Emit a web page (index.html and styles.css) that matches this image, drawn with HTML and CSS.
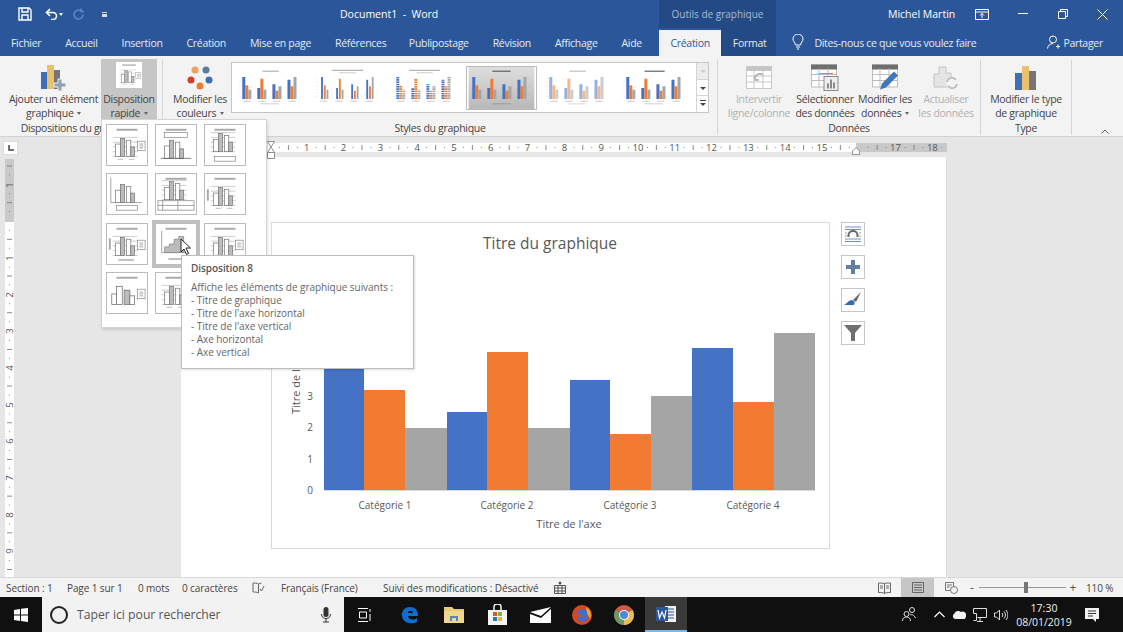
FILE: index.html
```html
<!DOCTYPE html>
<html lang="fr">
  <head>
    <meta charset="UTF-8" />
    <title>Document1 - Word</title>
    <link rel="stylesheet" href="styles.css">
  </head>
  <body>
    <svg class="defs" width="0" height="0">
      <defs>
        <g id="gbars">
          <path fill="#4472c4" d="M4 11h3.300v24H4zM20.500 23h3.300v12h-3.300zM37 19h3.300v16H37zM53.500 14h3.300v21h-3.300z" />
          <path fill="#ed7d31" d="M7.300 20h3.300v15H7.300zM23.800 13h3.300v22h-3.300zM40.300 26h3.300v9h-3.300zM56.800 21h3.300v14h-3.300z" />
          <path fill="#a5a5a5" d="M10.600 25h3.300v10h-3.300zM27.100 25h3.300v10h-3.300zM43.600 21h3.300v14h-3.300zM60.100 11h3.300v24h-3.300z" />
        </g>
        <g id="gthin">
          <path fill="#4472c4" d="M6 11h2v24H6zM22.500 23h2v12h-2zM39 19h2v16h-2zM55.500 14h2v21h-2z" />
          <path fill="#ed7d31" d="M9 20h2v15H9zM25.500 13h2v22h-2zM42 26h2v9h-2zM58.500 21h2v14h-2z" />
          <path fill="#a5a5a5" d="M12 25h2v10h-2zM28.500 25h2v10h-2zM45 21h2v14h-2zM61.500 11h2v24h-2z" />
        </g>
        <g id="gcaps" fill="#b5b5b5">
          <path d="M5 37h8v.8H5zM21.500 37h8v.8h-8zM38 37h8v.8h-8zM54.500 37h8v.8h-8z" />
          <path d="M1 12h1v.6H1zM1 16h1v.6H1zM1 20h1v.6H1zM1 24h1v.6H1zM1 28h1v.6H1zM1 32h1v.6H1z" />
        </g>
        <pattern id="stripes" width="4" height="2.500" patternUnits="userSpaceOnUse">
          <rect width="4" height=".8" fill="#fff" />
        </pattern>
        <linearGradient id="silver" x1="0" y1="0" x2="0" y2="1">
          <stop offset="0" stop-color="#dedede" />
          <stop offset="1" stop-color="#b8b8b8" />
        </linearGradient>
        <g id="tbars" stroke="#6f6f6f" stroke-width=".7">
          <rect x="9" y="20" width="5" height="13" fill="#fff" />
          <rect x="14" y="14" width="4.500" height="19" fill="#bcbcbc" />
          <rect x="20.500" y="16" width="4.500" height="17" fill="#fff" />
          <rect x="25" y="23" width="4" height="10" fill="#bcbcbc" />
        </g>
        <g id="tgrid" stroke="#a9a9a9" stroke-width=".6">
          <path d="M6 13h26M6 18h26M6 23h26M6 28h26M6 33h26" />
        </g>
        <g id="ttitle"><rect x="10" y="4" width="22" height="2" fill="#a8a8a8" /></g>
        <g id="tlegend" fill="#fff" stroke="#808080" stroke-width=".7">
          <rect x="32" y="17" width="8" height="10" />
          <path d="M34 20h4M34 22h4M34 24h4" />
        </g>
        <g id="tcaps"><path d="M11 36h6M23 36h6" stroke="#a8a8a8" stroke-width=".8" /></g>
      </defs>
    </svg>

    <header class="titlebar">
      <div class="qat">
        <svg class="ico" width="14" height="14" viewBox="0 0 14 14" fill="none" stroke="#fff" stroke-width="1.400"><path d="M1 1h10l2 2v10H1z" /><path d="M4 1v4h6V1M4 13V8h6v5" /></svg>
        <svg class="qat-undo" width="13" height="12" viewBox="0 0 13 12" fill="none" stroke="#fff" stroke-width="1.600"><path d="M5 1 1.500 4.500 5 8M2 4.500h6a3.500 3.500 0 0 1 0 7H6" /></svg>
        <span class="caret caret-white qat-caret"></span>
        <svg class="qat-redo" width="13" height="13" viewBox="0 0 13 13" fill="none" stroke="#5f86c1" stroke-width="1.600"><path d="M11 6.500a4.500 4.500 0 1 1-2-3.700M9 .5v3h3" /></svg>
        <span class="qat-more"></span>
      </div>
      <div class="doc-title">Document1 &nbsp;-&nbsp; Word</div>
      <div class="context-label">Outils de graphique</div>
      <div class="user">Michel Martin</div>
      <svg class="win-ribbon" width="14" height="11" viewBox="0 0 14 11" fill="none" stroke="#fff"><path d="M.5.500h13v10H.500zM.5 3h13" /><path d="M7 9V4.500M5 6.500l2-2 2 2" /></svg>
      <svg class="win-min" width="10" height="2" viewBox="0 0 10 2"><rect width="10" height="1" fill="#fff" /></svg>
      <svg class="win-max" width="10" height="10" viewBox="0 0 10 10" fill="none" stroke="#fff"><path d="M.5 2.500h7v7h-7zM2.500 2.500v-2h7v7h-2" /></svg>
      <svg class="win-close" width="11" height="11" viewBox="0 0 11 11" stroke="#fff"><path d="M.5.500l10 10M10.500.500l-10 10" /></svg>
    </header>

    <nav class="tabs">
      <span class="tab">Fichier</span>
      <span class="tab">Accueil</span>
      <span class="tab">Insertion</span>
      <span class="tab">Création</span>
      <span class="tab">Mise en page</span>
      <span class="tab">Références</span>
      <span class="tab">Publipostage</span>
      <span class="tab">Révision</span>
      <span class="tab">Affichage</span>
      <span class="tab">Aide</span>
      <span class="tab tab-active">Création</span>
      <span class="tab tab-context">Format</span>
      <svg class="bulb" width="12" height="16" viewBox="0 0 12 16" fill="none" stroke="#fff"><path d="M3.500 11C3 8 1 7.500 1 5a5 5 0 0 1 10 0c0 2.500-2 3-2.500 6zM4 13h4M5 15h2" /></svg>
      <span class="tell">Dites-nous ce que vous voulez faire</span>
      <svg class="share-ico" width="13" height="14" viewBox="0 0 13 14" fill="none" stroke="#fff"><circle cx="6" cy="4.500" r="3.500" /><path d="M.5 13.500c.5-3 2-4.500 5.500-5M9 11.500h4M11 9.500v4" /></svg>
      <span class="share">Partager</span>
    </nav>

    <section class="ribbon">
      <div class="group group-layouts">
        <div class="group-body">
          <div class="rbtn rbtn-add">
            <svg width="28" height="28" viewBox="0 0 28 28"><rect x="1" y="8" width="6" height="17" fill="#3f6fb5" /><rect x="7" y="1" width="7" height="24" fill="#ecc16b" /><rect x="14" y="6" width="6" height="19" fill="#767676" /><path d="M18 15h4v4h4v4h-4v4h-4v-4h-4v-4h4z" fill="#8ea2ba" stroke="#f3f3f3" /></svg>
            <span>Ajouter un élément<br>graphique <i class="caret"></i></span>
          </div>
          <div class="rbtn rbtn-quick">
            <svg class="quick-ico" width="26" height="26" viewBox="0 0 42 42"><rect width="42" height="42" fill="#fff" /><use href="#ttitle" /><use href="#tgrid" /><use href="#tbars" /><use href="#tlegend" /><use href="#tcaps" /></svg>
            <span>Disposition<br>rapide <i class="caret"></i></span>
          </div>
        </div>
        <div class="group-label">Dispositions du graphique</div>
      </div>

      <div class="group group-styles">
        <div class="group-body">
          <div class="rbtn rbtn-colors">
            <svg width="28" height="26" viewBox="0 0 28 26"><circle cx="9" cy="5" r="3.500" fill="#eda35d" /><circle cx="20" cy="5" r="3.500" fill="#5b7ca0" /><circle cx="5" cy="15" r="3.500" fill="#d2402a" /><circle cx="23" cy="15" r="3.500" fill="#3f6fb5" /><circle cx="14" cy="21" r="3.500" fill="#ed7d31" /></svg>
            <span>Modifier les<br>couleurs <i class="caret"></i></span>
          </div>
          <div class="gallery">
            <div class="gallery-items">
              <svg class="gal" viewBox="0 0 72 46"><rect x="26" y="4" width="18" height="1.200" fill="#aaa" /><use href="#gcaps" /><use href="#gbars" /><rect x="24" y="40" width="20" height=".8" fill="#bbb" /></svg>
              <svg class="gal" viewBox="0 0 72 46"><rect x="18" y="3" width="34" height="1.200" fill="#aaa" /><rect x="26" y="6" width="18" height=".8" fill="#bbb" /><use href="#gcaps" /><use href="#gthin" /></svg>
              <svg class="gal" viewBox="0 0 72 46"><rect x="18" y="3" width="34" height="1.200" fill="#aaa" /><rect x="26" y="6" width="18" height=".8" fill="#bbb" /><use href="#gcaps" /><use href="#gbars" /><rect x="0" y="9" width="72" height="26" fill="url(#stripes)" /></svg>
              <svg class="gal gal-selected" viewBox="0 0 72 46"><rect width="72" height="46" fill="url(#silver)" /><rect x="26" y="4" width="20" height="1.200" fill="#555" /><use href="#gbars" /><rect x="26" y="40" width="20" height=".8" fill="#888" /></svg>
              <svg class="gal" viewBox="0 0 72 46"><rect x="26" y="4" width="18" height="1.200" fill="#bbb" /><use href="#gcaps" /><use href="#gbars" opacity=".55" /><rect x="24" y="40" width="20" height=".8" fill="#ccc" /></svg>
              <svg class="gal" viewBox="0 0 72 46"><rect x="24" y="4" width="22" height="1.200" fill="#555" /><use href="#gcaps" /><use href="#gbars" /><rect x="24" y="40" width="20" height=".8" fill="#bbb" /></svg>
            </div>
            <div class="gallery-scroll">
              <span class="scroll-up"></span>
              <span class="scroll-down"></span>
              <span class="scroll-more"></span>
            </div>
          </div>
        </div>
        <div class="group-label">Styles du graphique</div>
      </div>

      <div class="group group-data">
        <div class="group-body">
          <div class="rbtn rbtn-off rbtn-switch">
            <svg width="26" height="24" viewBox="0 0 26 24" fill="#fff" stroke="#c9c9c9"><rect x=".5" y=".5" width="25" height="22" /><rect x=".5" y=".5" width="25" height="4" fill="#c4c4c4" /><path d="M.5 10h25M.5 16h25M8 4v19M17 4v19" /><path d="M17 9a5 5 0 0 0-8 5M9 10v4h4" fill="none" stroke="#a9a9a9" stroke-width="1.500" /></svg>
            <span>Intervertir<br>ligne/colonne</span>
          </div>
          <div class="rbtn rbtn-select">
            <svg width="28" height="27" viewBox="0 0 28 27" fill="#fff" stroke="#bdbdbd"><rect x=".5" y=".5" width="25" height="22" /><rect x=".5" y=".5" width="25" height="4" fill="#6f6f6f" stroke="#6f6f6f" /><path d="M.5 10h25M.5 16h25M8 4v19M17 4v19" /><path d="M8 9h14" stroke="#ed7d31" /><rect x="13" y="12" width="14" height="14" fill="#eee" stroke="#8a8a8a" /><path d="M16 24v-5h2v5zM19 24v-9h2v9zM22 24v-6h2v6z" fill="#8a8a8a" stroke="none" /></svg>
            <span>Sélectionner<br>des données</span>
          </div>
          <div class="rbtn rbtn-edit">
            <svg width="27" height="27" viewBox="0 0 27 27" fill="#fff" stroke="#bdbdbd"><rect x=".5" y=".5" width="25" height="22" /><rect x=".5" y=".5" width="25" height="4" fill="#6f6f6f" stroke="#6f6f6f" /><path d="M.5 10h25M.5 16h25M8 4v19M17 4v19" /><path d="m8 25 2-6L22 7l4 4-12 12z" fill="#3f76bd" stroke="none" /></svg>
            <span>Modifier les<br>données <i class="caret"></i></span>
          </div>
          <div class="rbtn rbtn-off rbtn-refresh">
            <svg width="26" height="24" viewBox="0 0 26 24"><path d="M1 21V8h5V1h7v6h5v14z" fill="#e4e4e4" stroke="#c4c4c4" /><circle cx="19" cy="17" r="6" fill="#f3f3f3" /><path d="M14 16a5 5 0 0 1 9-2M24 18a5 5 0 0 1-9 2" fill="none" stroke="#bcbcbc" stroke-width="1.600" /></svg>
            <span>Actualiser<br>les données</span>
          </div>
        </div>
        <div class="group-label">Données</div>
      </div>

      <div class="group group-type">
        <div class="group-body">
          <div class="rbtn rbtn-type">
            <svg width="22" height="24" viewBox="0 0 22 24"><rect x="0" y="7" width="7" height="17" fill="#3f6fb5" /><rect x="7" y="0" width="7" height="24" fill="#ecc16b" /><rect x="14" y="5" width="7" height="19" fill="#767676" /></svg>
            <span>Modifier le type<br>de graphique</span>
          </div>
        </div>
        <div class="group-label">Type</div>
      </div>
      <svg class="collapse" width="8" height="5" viewBox="0 0 8 5" fill="none" stroke="#666"><path d="M.5 4.500 4 1l3.500 3.500" /></svg>
    </section>

    <main class="workspace">
      <div class="ruler-row">
        <div class="ruler-corner"><svg width="8" height="8" viewBox="0 0 8 8" fill="none" stroke="#444" stroke-width="1.500"><path d="M2 1v5h5" /></svg></div>
        <div class="hruler">
          <span>1</span><span>2</span><span>3</span><span>4</span><span>5</span><span>6</span><span>7</span><span>8</span><span>9</span><span>10</span><span>11</span><span>12</span><span>13</span><span>14</span><span>15</span><span></span><span>17</span><span>18</span>
        </div>
        <svg class="indent-left" width="8" height="18" viewBox="0 0 8 18" fill="#fff" stroke="#8f8f8f"><path d="M.5.500h7L4 6 .5.500zM4 6l3.500 5.500h-7zM.5 11.500h7v6h-7z" /></svg>
        <svg class="indent-right" width="8" height="8" viewBox="0 0 8 8" fill="#fff" stroke="#8f8f8f"><path d="M4 .5 7.500 4v3.500h-7V4z" /></svg>
      </div>
      <div class="doc-row">
        <div class="left-gutter">
          <div class="vruler">
            <span>1</span><span></span><span>1</span><span>2</span><span>3</span><span>4</span><span>5</span><span>6</span><span>7</span><span>8</span><span>9</span>
          </div>
        </div>
        <div class="page">
          <div class="chart">
            <svg width="559" height="327" viewBox="271 222 559 327">
              <text class="chart-title" x="550" y="249" text-anchor="middle">Titre du graphique</text>
              <g fill="#4472c4">
                <rect x="324" y="354" width="40" height="136" />
                <rect x="447" y="412" width="40" height="78" />
                <rect x="570" y="380" width="40" height="110" />
                <rect x="692" y="348" width="41" height="142" />
              </g>
              <g fill="#f27b31">
                <rect x="364" y="390" width="41" height="100" />
                <rect x="487" y="352" width="41" height="138" />
                <rect x="610" y="434" width="41" height="56" />
                <rect x="733" y="402" width="41" height="88" />
              </g>
              <g fill="#a5a5a5">
                <rect x="405" y="428" width="42" height="62" />
                <rect x="528" y="428" width="42" height="62" />
                <rect x="651" y="396" width="41" height="94" />
                <rect x="774" y="333" width="41" height="157" />
              </g>
              <path d="M324 490.500h491" stroke="#d9d9d9" />
              <g class="chart-axis" text-anchor="end">
                <text x="313" y="400">3</text>
                <text x="313" y="431">2</text>
                <text x="313" y="463">1</text>
                <text x="313" y="494">0</text>
              </g>
              <g class="chart-axis" text-anchor="middle">
                <text x="385" y="509">Catégorie 1</text>
                <text x="507" y="509">Catégorie 2</text>
                <text x="630" y="509">Catégorie 3</text>
                <text x="753" y="509">Catégorie 4</text>
              </g>
              <text class="chart-axis-title" x="569" y="528" text-anchor="middle">Titre de l'axe</text>
              <text class="chart-axis-title" transform="translate(300 414) rotate(-90)">Titre de l'axe</text>
            </svg>
          </div>
          <div class="chart-tools">
            <div class="chart-tool"><svg width="18" height="18" viewBox="0 0 18 18" fill="none"><path d="M1 2h16M1 4.500h16M1 14h16M1 16.500h16" stroke="#6d93bd" /><path d="M1 8h2M15 8h2M1 11h2M15 11h2" stroke="#999" /><path d="M4.500 12V10a4.500 4 0 0 1 9 0v2" stroke="#666" stroke-width="2" /></svg></div>
            <div class="chart-tool"><svg width="14" height="14" viewBox="0 0 14 14"><path d="M5 0h4v5h5v4H9v5H5V9H0V5h5z" fill="#60809e" /></svg></div>
            <div class="chart-tool"><svg width="18" height="16" viewBox="0 0 18 16"><path d="M9 8 17 0l-5 10z" fill="#666" /><path d="M8 8c3 1 3 3 2 5H0c3-1 4-5 8-5z" fill="#2f6db5" /></svg></div>
            <div class="chart-tool"><svg width="18" height="18" viewBox="0 0 18 18"><path d="M0 1h18l-7 8v8H7V9z" fill="#6e6e6e" /></svg></div>
          </div>
        </div>
      </div>
    </main>

    <footer class="statusbar">
      <span class="st st-section">Section : 1</span>
      <span class="st st-page">Page 1 sur 1</span>
      <span class="st st-words">0 mots</span>
      <span class="st st-chars">0 caractères</span>
      <svg class="st-book" width="13" height="12" viewBox="0 0 13 12" fill="none" stroke="#666"><path d="M6.500 2v9M6.500 2C5 1 3 1 1 1v9c2 0 4 0 5.500 1M6.500 2c1-.5 2-.8 3-1M8 7l1.500 2L12 4" /></svg>
      <span class="st st-lang">Français (France)</span>
      <span class="st st-track">Suivi des modifications : Désactivé</span>
      <svg class="st-macro" width="12" height="13" viewBox="0 0 12 13" fill="none" stroke="#555"><path d="M.5 4.500h11v8H.5zM.5 7h11M.5 10h11M4 4.500v8M8 4.500v8" /><circle cx="6" cy="2" r="1.500" fill="#555" stroke="none" /></svg>
      <div class="views">
        <svg width="13" height="12" viewBox="0 0 13 12" fill="none" stroke="#666"><path d="M6.500 1.500v10M6.500 1.500C5 1 3 1 .5 1v9.500c2.500 0 4.500 0 6 1 1.500-1 3.500-1 6-1V1c-2.500 0-4.500 0-6 .5zM2 4h3M2 6h3M8 4h3M8 6h3" /></svg>
        <div class="view-on"><svg width="12" height="11" viewBox="0 0 12 11" fill="none" stroke="#666"><path d="M.5.500h11v10H.5zM2 3h8M2 5.500h8M2 8h8" /></svg></div>
        <svg width="13" height="12" viewBox="0 0 13 12" fill="none" stroke="#777"><path d="M.5.500h8v8h-8zM2 3h5M2 5h3" /><circle cx="9" cy="8" r="3.500" fill="#f3f3f3" /></svg>
      </div>
      <div class="zoom">
        <span class="zoom-sign">-</span>
        <div class="zoom-track"><span class="zoom-thumb"></span></div>
        <span class="zoom-sign">+</span>
      </div>
      <span class="st st-percent">110 %</span>
    </footer>

    <footer class="taskbar">
      <svg class="start" width="14" height="14" viewBox="0 0 14 14" fill="#fff"><path d="m0 2 6-1v5.500H0zM7 .8 14 0v6.500H7zM0 7.500h6V13l-6-1zM7 7.500h7V14l-7-1z" /></svg>
      <div class="search">
        <span class="cortana"></span>
        <span class="search-text">Taper ici pour rechercher</span>
        <svg width="10" height="16" viewBox="0 0 10 16"><rect x="2.500" y="0" width="5" height="10" rx="2.500" fill="#333" /><path d="M.5 7c0 3 2 4.500 4.500 4.500S9.500 10 9.500 7M5 11.500V15M2 15h6" fill="none" stroke="#333" /></svg>
      </div>
      <svg class="tb-ico tb-tasks" width="14" height="14" viewBox="0 0 14 14" fill="none" stroke="#fff"><path d="M0 .5h10M0 13.500h10M1.500 4h7v6h-7zM12 1v3M12 6v7" /></svg>
      <svg class="tb-ico tb-edge" width="18" height="18" viewBox="0 0 18 18"><path d="M1 9c0-5 3-8 8-8s8 3 8 9H7c0 3 5 5 9 2v4c-6 3-15 1-15-7zm6-2h5c0-3-5-3-5 0z" fill="#0f6fd0" /></svg>
      <svg class="tb-ico tb-folder" width="20" height="17" viewBox="0 0 20 17"><path d="M0 1h8l2 2h10v14H0z" fill="#e9c877" /><path d="M0 5h20v12H0z" fill="#f1d68d" /><path d="M6 15v-5h8v5h-2v-3H8v3z" fill="#5586c4" /></svg>
      <svg class="tb-ico tb-store" width="21" height="21" viewBox="0 0 21 21"><path d="M1 6h19v15H1z" fill="#f4f4f4" /><path d="M7 6V3a3.500 3 0 0 1 7 0v3" fill="none" stroke="#f4f4f4" stroke-width="1.500" /><rect x="6" y="8" width="4" height="4" fill="#e2542a" /><rect x="11" y="8" width="4" height="4" fill="#86b23b" /><rect x="6" y="13" width="4" height="4" fill="#1e78c8" /><rect x="11" y="13" width="4" height="4" fill="#eeb52b" /></svg>
      <svg class="tb-ico tb-mail" width="21" height="16" viewBox="0 0 21 16"><path d="M0 5 21 0 11 9z" fill="#fff" /><path d="M0 7v9h21V2L11 11z" fill="#fff" /></svg>
      <svg class="tb-ico tb-firefox" width="20" height="20" viewBox="0 0 20 20"><circle cx="10" cy="10" r="10" fill="#d9471f" /><path d="M4 9c2-5 8-6 11-3 3 4 1 10-4 11-4 0-6-3-5-6 2 2 4 2 5 0-2 0-3-1-3-3-2 1-3 1-4 1z" fill="#3b6fd0" /><path d="M14 2c4 2 6 7 4 12l-3-6z" fill="#f5a623" /></svg>
      <svg class="tb-ico tb-chrome" width="20" height="20" viewBox="0 0 20 20"><circle cx="10" cy="10" r="10" fill="#cf5a46" /><path d="M10 10 18.600 5A10 10 0 0 1 10 20z" fill="#e9bf55" /><path d="M10 10v10A10 10 0 0 1 1.400 5z" fill="#6b9a68" /><circle cx="10" cy="10" r="5" fill="#fff" /><circle cx="10" cy="10" r="4" fill="#4f86d6" /></svg>
      <div class="tb-word">
        <svg width="20" height="18" viewBox="0 0 20 18"><rect x="9" y="1" width="11" height="16" fill="#f2f2f2" /><path d="M11 4h7M11 7h7M11 10h7M11 13h7" stroke="#2b579a" /><rect x="0" y="2" width="12" height="14" fill="#2b579a" /><path d="m2 5 1.500 8 2.500-6 2.500 6L10 5" fill="none" stroke="#fff" stroke-width="1.200" /></svg>
      </div>
      <svg class="tb-ico tb-people" width="14" height="15" viewBox="0 0 14 15" fill="none" stroke="#ddd"><circle cx="4.500" cy="7" r="2.500" /><path d="M.5 14c0-2.500 1.500-4 4-4s4 1.500 4 4" /><circle cx="10" cy="3" r="2.500" /><path d="M8 8c2-1 4 0 5.500 3" /></svg>
      <svg class="tb-ico tb-chevron" width="11" height="7" viewBox="0 0 11 7" fill="none" stroke="#fff" stroke-width="1.200"><path d="m.5 6 5-5 5 5" /></svg>
      <svg class="tb-ico tb-cloud" width="14" height="9" viewBox="0 0 14 9"><path d="M3 9a3 3 0 0 1-.5-5.500A4 4 0 0 1 9 2a3.500 3.500 0 0 1 5 4c0 2-1 3-2 3z" fill="#f2f2f2" /></svg>
      <svg class="tb-ico tb-net" width="14" height="14" viewBox="0 0 14 14" fill="none" stroke="#ddd"><path d="M.5.500h13v9H4.500M7 9.500V13M4 13.500h6M.5.500v5h3v7h-3" /></svg>
      <svg class="tb-ico tb-sound" width="14" height="12" viewBox="0 0 14 12" fill="none" stroke="#ddd"><path d="M.5 4v4h2l3 3V1l-3 3zM8 4c1 1 1 3 0 4M10 2.500c2 2 2 5 0 7M12 1c2.500 3 2.500 7 0 10" /></svg>
      <div class="clock"><span>17:30</span><span>08/01/2019</span></div>
      <svg class="tb-ico tb-notif" width="14" height="14" viewBox="0 0 14 14"><path d="M0 0h14v11h-3v3l-3-3H0z" fill="#f2f2f2" /><path d="M3 3h8M3 5.500h8M3 8h5" stroke="#333" /></svg>
    </footer>

    <div class="layout-menu">
      <div class="layout"><svg viewBox="0 0 42 42"><use href="#ttitle" /><use href="#tgrid" /><use href="#tbars" /><use href="#tlegend" /><use href="#tcaps" /></svg></div>
      <div class="layout"><svg viewBox="0 0 42 42"><use href="#ttitle" /><rect x="9" y="8" width="24" height="5" fill="#fff" stroke="#808080" stroke-width=".7" /><use href="#tbars" y="2" /><path d="M5 35h32" stroke="#555" stroke-width=".8" /></svg></div>
      <div class="layout"><svg viewBox="0 0 42 42"><use href="#ttitle" /><use href="#tgrid" y="-5" /><use href="#tbars" y="-5" /><rect x="10" y="33" width="22" height="5" fill="#fff" stroke="#808080" stroke-width=".7" /></svg></div>
      <div class="layout"><svg viewBox="0 0 42 42"><path d="M4 4v26h33" fill="none" stroke="#777" stroke-width=".7" /><use href="#tbars" y="-3" /><rect x="10" y="33" width="22" height="5" fill="#fff" stroke="#808080" stroke-width=".7" /></svg></div>
      <div class="layout"><svg viewBox="0 0 42 42"><use href="#ttitle" /><use href="#tgrid" y="-6" /><use href="#tbars" y="-6" /><path d="M2 28h38v10H2zM2 33h38M7 28v10M23 28v10" fill="#fff" stroke="#777" stroke-width=".7" /></svg></div>
      <div class="layout"><svg viewBox="0 0 42 42"><use href="#ttitle" /><rect x="2" y="16" width="2" height="12" fill="#a8a8a8" /><use href="#tgrid" /><use href="#tbars" /><use href="#tcaps" /></svg></div>
      <div class="layout"><svg viewBox="0 0 42 42"><use href="#ttitle" /><rect x="2" y="15" width="2" height="12" fill="#a8a8a8" /><use href="#tgrid" /><use href="#tbars" /><use href="#tlegend" /><rect x="12" y="37" width="16" height="1.500" fill="#a8a8a8" /></svg></div>
      <div class="layout layout-active"><svg viewBox="0 0 42 42"><use href="#ttitle" /><path d="M6 7v23h29" fill="none" stroke="#777" stroke-width=".7" /><path d="M9 30v-6h5v-3h5v-5h5v-3h5v17z" fill="#bcbcbc" stroke="#6f6f6f" stroke-width=".6" /><rect x="13" y="36" width="16" height="1.500" fill="#a8a8a8" /></svg></div>
      <div class="layout"><svg viewBox="0 0 42 42"><use href="#ttitle" /><use href="#tgrid" /><use href="#tbars" /><use href="#tlegend" /><use href="#tcaps" /></svg></div>
      <div class="layout"><svg viewBox="0 0 42 42"><use href="#ttitle" /><rect x="10" y="14" width="6" height="19" fill="#fff" stroke="#6f6f6f" stroke-width=".8" /><rect x="18" y="18" width="6" height="15" fill="#bcbcbc" stroke="#6f6f6f" stroke-width=".8" /><rect x="24" y="24" width="5" height="9" fill="#fff" stroke="#6f6f6f" stroke-width=".8" /><rect x="5" y="22" width="5" height="11" fill="#fff" stroke="#6f6f6f" stroke-width=".8" /><use href="#tlegend" /></svg></div>
      <div class="layout"><svg viewBox="0 0 42 42"><use href="#tgrid" /><use href="#tbars" /><use href="#ttitle" /><use href="#tcaps" /></svg></div>
    </div>

    <div class="tooltip">
      <div class="tooltip-title">Disposition 8</div>
      <div>Affiche les éléments de graphique suivants :</div>
      <div>- Titre de graphique</div>
      <div>- Titre de l'axe horizontal</div>
      <div>- Titre de l'axe vertical</div>
      <div>- Axe horizontal</div>
      <div>- Axe vertical</div>
    </div>

    <svg class="cursor" width="12" height="18" viewBox="0 0 12 18"><path d="M1 1v13l3-3 2.500 5.500 2-1L6 10h4.500z" fill="#fff" stroke="#222" /></svg>
  </body>
</html>
```

FILE: styles.css
```css
* {
  box-sizing: border-box;
}

body {
  margin: 0;
  width: 1123px;
  height: 632px;
  overflow: hidden;
  display: flex;
  flex-direction: column;
  font-family: "Open Sans", "Noto Sans", sans-serif;
  font-size: 10.5px;
  color: #444;
  background-color: #e6e6e6;
  position: relative;
}

svg {
  display: block;
  flex: none;
}

.defs {
  position: absolute;
}

/* title bar */
.titlebar {
  height: 28px;
  flex: none;
  display: flex;
  align-items: center;
  background-color: #2b579a;
  color: #fff;
}

.qat {
  width: 340px;
  flex: none;
  display: flex;
  align-items: center;
  padding-left: 18px;
}

.qat-undo {
  margin-left: 13px;
}

.qat-caret {
  margin-left: 3px;
}

.qat-redo {
  margin-left: 9px;
}

.qat-more {
  margin-left: 17px;
  width: 5px;
  height: 5px;
  border-top: 1px solid #fff;
  border-bottom: 3px solid #fff;
  opacity: 0.8;
}

.doc-title {
  width: 319px;
  flex: none;
}

.context-label {
  width: 117px;
  flex: none;
  align-self: stretch;
  line-height: 28px;
  text-align: center;
  background-color: #234a85;
  color: #a9bbd6;
  font-size: 10px;
}

.user {
  margin-left: 112px;
  width: 87px;
  flex: none;
}

.win-min {
  margin-left: 29px;
}

.win-max {
  margin-left: 30px;
}

.win-close {
  margin-left: 29px;
}

/* tabs */
.tabs {
  height: 28px;
  flex: none;
  display: flex;
  align-items: stretch;
  background-color: #2b579a;
  color: #e4eaf3;
  letter-spacing: -0.3px;
}

.tab {
  padding: 0 12px;
  line-height: 30px;
  white-space: nowrap;
}

.tab:first-child {
  margin-left: -1px;
}

.tab:nth-child(n+7) {
  position: relative;
  left: -1.5px;
}

.tab-active {
  background-color: #f3f3f3;
  color: #2b579a;
  margin-top: 2px;
  margin-left: 4px;
  padding: 0 11px;
  line-height: 26px;
}

.tab.tab-active,
.tab.tab-context {
  left: 0;
}

.tab-context {
  background-color: #234a85;
  padding-right: 10px;
}

.bulb {
  align-self: center;
  margin-left: 16px;
}

.tell {
  line-height: 30px;
  margin-left: 10px;
  width: 233px;
  white-space: nowrap;
}

.share-ico {
  align-self: center;
}

.share {
  line-height: 30px;
  margin-left: 3px;
}

/* ribbon */
.ribbon {
  height: 81px;
  flex: none;
  display: flex;
  background-color: #f3f3f3;
  border-bottom: 1px solid #d2d2d2;
  position: relative;
  letter-spacing: -0.3px;
}

.group {
  display: flex;
  flex-direction: column;
  flex: none;
  margin: 4px 0 1px;
  border-right: 1px solid #d4d4d4;
}

.group-body {
  flex: 1;
  min-height: 0;
  display: flex;
  margin-top: -1px;
}

.group-label {
  height: 13px;
  line-height: 13px;
  text-align: center;
  white-space: nowrap;
  color: #444;
}

.group-layouts {
  width: 163px;
}

.group-styles {
  width: 555px;
}

.group-data {
  width: 263px;
}

.group-type {
  width: 91px;
}

.rbtn {
  display: flex;
  flex-direction: column;
  align-items: center;
  text-align: center;
  flex: none;
  line-height: 14px;
  white-space: nowrap;
}

.rbtn svg {
  height: 28px;
  margin-top: 5px;
}

.rbtn-add {
  width: 101px;
  padding-left: 6px;
}

.rbtn-quick {
  width: 56px;
  background-color: #c6c6c6;
  height: 60px;
}

.rbtn-quick svg {
  height: 26px;
  margin-top: 3px;
}

.rbtn-quick span {
  margin-top: 4px;
}

.rbtn-colors {
  width: 68px;
  padding-left: 6px;
}

.rbtn-off {
  color: #b1b1b1;
}

.rbtn-switch {
  width: 76px;
  padding-left: 6px;
}

.rbtn-select {
  width: 62px;
}

.rbtn-edit {
  width: 58px;
}

.rbtn-refresh {
  width: 64px;
}

.rbtn-type {
  width: 90px;
}

.caret {
  display: inline-block;
  width: 0;
  height: 0;
  margin-left: 1px;
  vertical-align: 2px;
  border-left: 2.5px solid transparent;
  border-right: 2.5px solid transparent;
  border-top: 3px solid #666;
}

.caret-white {
  border-top-color: #fff;
}

.gallery {
  width: 478px;
  height: 51px;
  flex: none;
  margin-top: 3px;
  display: flex;
  background-color: #fff;
  border: 1px solid #c6c6c6;
}

.gallery-items {
  flex: 1;
  display: flex;
  justify-content: space-between;
  align-items: center;
  padding: 0 6px 0 5px;
}

.gal {
  width: 69px;
  height: 42px;
}

.gal-selected {
  outline: 1px solid #bbb;
}

.gallery-scroll {
  width: 12px;
  display: flex;
  flex-direction: column;
  border-left: 1px solid #d4d4d4;
}

.gallery-scroll span {
  flex: 1;
  border-bottom: 1px solid #d4d4d4;
  position: relative;
}

.gallery-scroll span:last-child {
  border-bottom: 0;
}

.scroll-up {
  background-color: #ececec;
}

.scroll-up::after,
.scroll-down::after,
.scroll-more::after {
  content: "";
  position: absolute;
  left: 3px;
  top: 7px;
  border-left: 3px solid transparent;
  border-right: 3px solid transparent;
  border-top: 3px solid #444;
}

.scroll-up::after {
  border-top-color: #cfcfcf;
}

.scroll-more::before {
  content: "";
  position: absolute;
  left: 3px;
  top: 4px;
  width: 6px;
  border-top: 1px solid #444;
}

.collapse {
  position: absolute;
  top: 73px;
  right: 14px;
}

/* rulers and document */
.workspace {
  flex: 1;
  display: flex;
  flex-direction: column;
  min-height: 0;
}

.ruler-row {
  height: 20px;
  flex: none;
  position: relative;
  display: flex;
}

.ruler-corner {
  width: 15px;
  height: 14px;
  margin: 4px 0 0 3px;
  background-color: #fff;
  border: 1px solid #ddd;
  display: flex;
  align-items: center;
  justify-content: center;
}

.hruler {
  margin: 6px 0 0 250px;
  width: 679px;
  height: 9px;
  padding-left: 20.4px;
  display: flex;
  font-size: 9.5px;
  line-height: 9px;
  color: #555;
  background:
    linear-gradient(90deg, transparent 18px, #888 18px, #888 19px, transparent 19px) 2px 2px / 36.8px 5px repeat-x,
    linear-gradient(90deg, transparent 9px, #888 9px, #888 10px, transparent 10px, transparent 27px, #888 27px, #888 28px, transparent 28px) 2px 4px / 36.8px 1px repeat-x,
    linear-gradient(#c9c9c9, #c9c9c9) right / 91px 100% no-repeat,
    #fff;
}

.hruler span {
  width: 36.8px;
  flex: none;
  text-align: center;
}

.indent-left {
  position: absolute;
  left: 267px;
  top: 4px;
}

.indent-right {
  position: absolute;
  left: 852px;
  top: 10px;
}

.doc-row {
  flex: 1;
  display: flex;
  min-height: 0;
}

.left-gutter {
  width: 181px;
  flex: none;
  padding: 2px 0 0 5px;
}

.vruler {
  width: 9px;
  height: 418px;
  padding-top: 7.6px;
  display: flex;
  flex-direction: column;
  font-size: 9.5px;
  line-height: 9px;
  color: #555;
  background:
    linear-gradient(180deg, transparent 18px, #888 18px, #888 19px, transparent 19px) 2px -11.4px / 5px 36.7px repeat-y,
    linear-gradient(180deg, transparent 9px, #888 9px, #888 10px, transparent 10px, transparent 27px, #888 27px, #888 28px, transparent 28px) 4px -11.4px / 1px 36.7px repeat-y,
    linear-gradient(#c9c9c9, #c9c9c9) top / 100% 63px no-repeat,
    #fff;
}

.vruler span {
  height: 36.7px;
  flex: none;
  display: flex;
  align-items: center;
  justify-content: center;
  writing-mode: vertical-rl;
  transform: rotate(180deg);
}

.page {
  width: 766px;
  flex: none;
  background-color: #fff;
  padding: 65px 0 0 90px;
  display: flex;
  align-items: flex-start;
  height: 421px;
  border-right: 1px solid #ddd;
}

.chart {
  width: 559px;
  height: 327px;
  flex: none;
  border: 1px solid #d9d9d9;
}

.chart svg {
  margin: -1px;
}

.chart-title {
  font-size: 15.5px;
  fill: #595959;
}

.chart-axis {
  font-size: 10px;
  fill: #595959;
}

.chart-axis-title {
  font-size: 11px;
  fill: #595959;
}

.chart-tools {
  margin-left: 11px;
  display: flex;
  flex-direction: column;
  gap: 9px;
}

.chart-tool {
  width: 24px;
  height: 24px;
  background-color: #fff;
  border: 1px solid #c6c6c6;
  display: flex;
  align-items: center;
  justify-content: center;
}

/* status bar */
.statusbar {
  height: 20px;
  flex: none;
  display: flex;
  align-items: center;
  background-color: #f3f3f3;
  border-top: 1px solid #d9d9d9;
  padding-left: 6px;
  font-size: 10px;
  letter-spacing: -0.1px;
  color: #444;
  white-space: nowrap;
}

.st-section {
  width: 61px;
}

.st-page {
  width: 71px;
}

.st-words {
  width: 44px;
}

.st-chars {
  width: 70px;
}

.st-lang {
  margin-left: 16px;
  width: 102px;
}

.st-track {
  width: 171px;
}

.views {
  margin-left: 312px;
  display: flex;
  align-items: center;
  align-self: stretch;
}

.view-on {
  width: 33px;
  margin-left: 10px;
  margin-right: 11px;
  align-self: stretch;
  background-color: #c6c6c6;
  display: flex;
  align-items: center;
  justify-content: center;
}

.zoom {
  margin-left: 10px;
  display: flex;
  align-items: center;
  font-size: 12px;
  color: #555;
}

.zoom-sign {
  width: 8px;
  text-align: center;
}

.zoom-track {
  width: 87px;
  height: 1px;
  margin: 0 3px;
  background-color: #999;
  position: relative;
}

.zoom-thumb {
  position: absolute;
  left: 45px;
  top: -5px;
  width: 4px;
  height: 11px;
  background-color: #777;
}

.st-percent {
  margin-left: 9px;
}

/* taskbar */
.taskbar {
  height: 35px;
  flex: none;
  display: flex;
  align-items: center;
  background-color: #101010;
  color: #eee;
}

.start {
  margin-left: 14px;
}

.search {
  margin-left: 14px;
  width: 302px;
  align-self: stretch;
  display: flex;
  align-items: center;
  background-color: #f2f2f2;
  padding-left: 8px;
  color: #555;
}

.cortana {
  width: 18px;
  height: 18px;
  border: 2.5px solid #222;
  border-radius: 50%;
  flex: none;
}

.search-text {
  width: 244px;
  margin-left: 9px;
  font-size: 12.2px;
  flex: none;
}

.tb-tasks {
  margin-left: 14px;
}

.tb-edge {
  margin-left: 29px;
}

.tb-folder {
  margin-left: 25px;
}

.tb-store {
  margin-left: 23px;
}

.tb-mail {
  margin-left: 22px;
}

.tb-firefox {
  margin-left: 21px;
}

.tb-chrome {
  margin-left: 22px;
}

.tb-word {
  margin-left: 11px;
  width: 42px;
  align-self: stretch;
  display: flex;
  align-items: center;
  justify-content: center;
  background-color: #3a3a3a;
  border-bottom: 2px solid #76b9ed;
}

.tb-people {
  margin-left: 215px;
}

.tb-chevron {
  margin-left: 18px;
}

.tb-cloud {
  margin-left: 7px;
}

.tb-net {
  margin-left: 7px;
}

.tb-sound {
  margin-left: 7px;
}

.clock {
  margin-left: 6px;
  width: 60px;
  display: flex;
  flex-direction: column;
  align-items: center;
  font-size: 10.5px;
  line-height: 14px;
}

.tb-notif {
  margin-left: 11px;
}

/* floating panels */
.layout-menu {
  position: absolute;
  left: 101px;
  top: 119px;
  width: 166px;
  height: 209px;
  background-color: #fff;
  border: 1px solid #d4d4d4;
  box-shadow: 1px 2px 3px rgba(0, 0, 0, 0.12);
  padding: 4px;
  display: grid;
  grid-template-columns: repeat(3, 42px);
  grid-auto-rows: 42px;
  column-gap: 7px;
  row-gap: 7.3px;
}

.layout {
  border: 1px solid #bbb;
  background-color: #fff;
  width: 42px;
  height: 42px;
}

.layout svg {
  width: 40px;
  height: 40px;
}

.layout-active {
  outline: 3px solid #c0c0c0;
}

.tooltip {
  position: absolute;
  left: 181px;
  top: 255px;
  width: 233px;
  height: 114px;
  background-color: #fff;
  border: 1px solid #bdbdbd;
  box-shadow: 1px 1px 2px rgba(0, 0, 0, 0.15);
  padding: 6px 9px;
  font-size: 10px;
  letter-spacing: -0.05px;
  line-height: 13px;
  color: #666;
  white-space: nowrap;
}

.tooltip-title {
  font-weight: 600;
  color: #555;
  margin-bottom: 6px;
}

.cursor {
  position: absolute;
  left: 180px;
  top: 238px;
}
```
